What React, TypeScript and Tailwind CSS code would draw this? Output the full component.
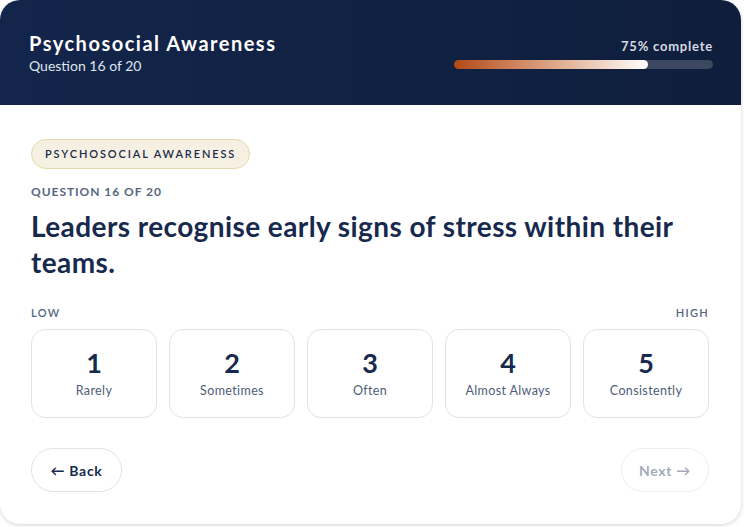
import React from "react";

const options = [
  { value: 1, label: "Rarely" },
  { value: 2, label: "Sometimes" },
  { value: 3, label: "Often" },
  { value: 4, label: "Almost Always" },
  { value: 5, label: "Consistently" },
];

export default function App() {
  const progress = 75;
  return (
    <div
      className="w-[744px] h-[527px] bg-white overflow-hidden"
      style={{ fontFamily: "Lato, 'Noto Sans', sans-serif" }}
    >
      <div className="w-[741px] h-[524px] rounded-[20px] bg-white overflow-hidden shadow-[0_1px_4px_rgba(0,0,0,0.18)] flex flex-col">
        {/* header */}
        <div className="h-[105px] shrink-0 bg-gradient-to-r from-[#13254b] to-[#0f1e3c] flex items-center justify-between pl-[29px] pr-[28px]">
          <div className="flex flex-col">
            <div className="text-white font-bold text-[20px] leading-[24px] tracking-[0.075em]">Psychosocial Awareness</div>
            <div className="text-[#dfe4ee] text-[14px] leading-[18px] mt-[2px]">Question 16 of 20</div>
          </div>
          <div className="flex flex-col items-end w-[259px] mt-[2px]">
            <div className="text-[#d6dae2] font-bold text-[13px] leading-[16px] tracking-[0.06em]">
              {progress}% complete
            </div>
            <div className="w-full h-[9px] rounded-full bg-[#3c4860] mt-[6px] overflow-hidden">
              <div
                className="h-full rounded-full bg-gradient-to-r from-[#b2480c] via-[#dca584] to-white"
                style={{ width: `${progress}%` }}
              />
            </div>
          </div>
        </div>

        {/* body */}
        <div className="flex-1 pl-[31px] pr-[32px] pt-[34px] flex flex-col">
          <div className="self-start h-[30px] px-[13px] rounded-full bg-[#f6f0e2] border border-[#e6d7ae] flex items-center text-[11px] font-semibold tracking-[0.17em] text-[#1a2b4c]">
            PSYCHOSOCIAL AWARENESS
          </div>
          <div className="mt-[15px] text-[12px] font-bold tracking-[0.08em] text-[#56667f] leading-[16px]">
            QUESTION 16 OF 20
          </div>
          <div className="mt-[8px] text-[28px] font-bold leading-[36px] text-[#172a4e] tracking-[0.015em] pr-[20px]">
            Leaders recognise early signs of stress within their teams.
          </div>
          <div className="mt-[26px] flex justify-between text-[11px] font-semibold tracking-[0.12em] text-[#56667f] leading-[14px]">
            <span>LOW</span>
            <span>HIGH</span>
          </div>
          <div className="mt-[9px] grid grid-cols-5 gap-[12px]">
            {options.map((o) => (
              <div
                key={o.value}
                className="h-[89px] rounded-[14px] border border-[#e1e3ea] bg-white flex flex-col items-center justify-center"
              >
                <div className="text-[27px] font-bold leading-[30px] text-[#172a4e]">{o.value}</div>
                <div className="text-[12.5px] leading-[16px] text-[#4e5d78] mt-[5px] tracking-[0.03em]">{o.label}</div>
              </div>
            ))}
          </div>
          <div className="mt-[30px] flex justify-between">
            <div className="h-[44px] w-[91px] rounded-full border border-[#e1e3ea] flex items-center justify-center text-[14px] font-bold text-[#172a4e] tracking-[0.05em]">
              ← Back
            </div>
            <div className="h-[44px] w-[88px] rounded-full border border-[#eceef2] flex items-center justify-center text-[14px] font-bold text-[#a3abba] tracking-[0.05em]">
              Next →
            </div>
          </div>
        </div>
      </div>
    </div>
  );
}
